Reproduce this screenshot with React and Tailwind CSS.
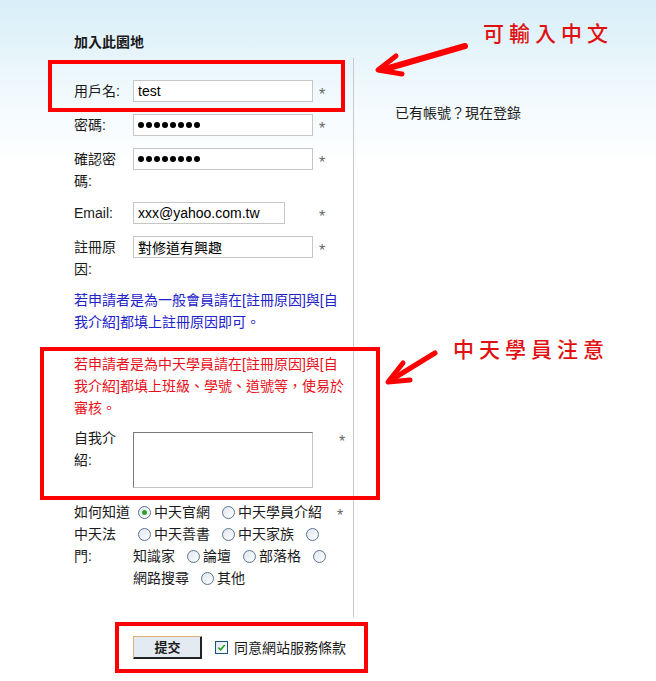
import React from 'react';

const Radio = ({ checked, first }) => (
  <span
    className={`inline-flex items-center justify-center w-[13px] h-[13px] rounded-full border border-[#5b7390] bg-gradient-to-br from-[#dfe6ee] to-white mr-[3px] shrink-0 ${first ? 'ml-[5px]' : 'ml-[12px]'}`}
  >
    {checked && <span className="w-[5px] h-[5px] rounded-full bg-[#2ea12e]" />}
  </span>
);

const Star = () => <span className="h-[22px] text-[16px] leading-[29px] text-[#666]">*</span>;

const Row = ({ label, children, cell = 'w-[186px]', className = '' }) => (
  <div className={`flex items-start ${className}`}>
    <div className="w-[59px] leading-[22px] shrink-0">{label}</div>
    <div className={`${cell} shrink-0`}>{children}</div>
    <Star />
  </div>
);

const inputCls =
  'h-[22px] border border-[#c6c6c6] bg-white px-[4px] text-[14px] text-black outline-none';

const Dots = () => (
  <div className={`${inputCls} w-[180px] flex items-center gap-[2px]`}>
    {Array.from({ length: 8 }).map((_, i) => (
      <span key={i} className="w-[6px] h-[6px] rounded-full bg-black" />
    ))}
  </div>
);

const App = () => {
  return (
    <div className="relative w-[656px] min-h-[681px] bg-linear-to-b from-[#d8eef8] from-0% via-[#eef8fc] via-[12%] to-white to-[24%] text-[14px] text-[#1a1a1a] font-['Liberation_Sans','Noto_Sans_CJK_TC',sans-serif]">
      <div className="pl-[74px] pt-[31px]">
        <h2 className="font-bold leading-[22px]">加入此園地</h2>

        <div className="flex mt-[5px]">
          {/* form column */}
          <div className="w-[280px] border-r border-[#c8c8c8] pt-[22px] pb-[28px]">
            <Row label="用戶名:" className="mb-[12px]">
              <input readOnly value="test" className={`${inputCls} w-[180px]`} />
            </Row>
            <Row label="密碼:" className="mb-[12px]">
              <Dots />
            </Row>
            <Row label="確認密碼:" className="mb-[10px]">
              <Dots />
            </Row>
            <Row label="Email:" className="mb-[12px]">
              <input readOnly value="xxx@yahoo.com.tw" className={`${inputCls} w-[152px]`} />
            </Row>
            <Row label="註冊原因:">
              <input readOnly value="對修道有興趣" className={`${inputCls} w-[180px]`} />
            </Row>

            <p className="mt-[9px] w-[272px] leading-[22px] text-[#1d22c9]">
              若申請者是為一般會員請在[註冊原因]與[自我介紹]都填上註冊原因即可。
            </p>
            <p className="mt-[20px] w-[272px] leading-[22px] text-[#e8101a]">
              若申請者是為中天學員請在[註冊原因]與[自我介紹]都填上班級、學號、道號等，使易於審核。
            </p>

            <Row label="自我介紹:" cell="w-[206px]" className="mt-[8px]">
              <textarea
                readOnly
                className="block mt-[5px] w-[180px] h-[56px] resize-none bg-white border border-[#c4c4c4] border-t-[#7a7a7a] border-l-[#7a7a7a] outline-none"
              />
            </Row>

            <Row label="如何知道中天法門:" cell="w-[204px]" className="mt-[13px]">
              <div className="leading-[22px]">
                <div className="flex items-center h-[22px]">
                  <Radio first checked />
                  <span>中天官網</span>
                  <Radio />
                  <span>中天學員介紹</span>
                </div>
                <div className="flex items-center h-[22px]">
                  <Radio first />
                  <span>中天善書</span>
                  <Radio />
                  <span>中天家族</span>
                  <Radio />
                </div>
                <div className="flex items-center h-[22px]">
                  <span>知識家</span>
                  <Radio />
                  <span>論壇</span>
                  <Radio />
                  <span>部落格</span>
                  <Radio />
                </div>
                <div className="flex items-center h-[22px]">
                  <span>網路搜尋</span>
                  <Radio />
                  <span>其他</span>
                </div>
              </div>
            </Row>
          </div>

          {/* right column */}
          <div className="pl-[41px] pt-[44px] leading-[22px]">已有帳號？現在登錄</div>
        </div>

        {/* submit row */}
        <div className="flex items-center mt-[19px] ml-[59px]">
          <button className="w-[69px] h-[23px] bg-[#e4eaf1] border border-[#222] border-t-[#e6b070] border-l-[#e6b070] shadow-[inset_-1px_-1px_0_#222] text-[13px] font-bold leading-none">
            提交
          </button>
          <span className="ml-[13px] w-[13px] h-[13px] border border-[#1c5180] bg-gradient-to-br from-[#dfe6ee] to-white flex items-center justify-center">
            <svg viewBox="0 0 10 10" className="w-[9px] h-[9px]">
              <path d="M1.5 5.2 L4 7.6 L8.6 2.2" fill="none" stroke="#21a121" strokeWidth="1.8" />
            </svg>
          </span>
          <span className="ml-[6px] leading-[22px]">同意網站服務條款</span>
        </div>
      </div>

      {/* annotations */}
      <div className="absolute left-[48px] top-[60px] w-[297px] h-[52px] border-4 border-[#ff0000]" />
      <div className="absolute left-[40px] top-[347px] w-[340px] h-[153px] border-4 border-[#ff0000]" />
      <div className="absolute left-[115px] top-[622px] w-[253px] h-[51px] border-4 border-[#ff0000]" />

      <div className="absolute left-[483px] top-[20px] text-[21px] font-medium tracking-[5px] leading-[28px] text-[#e01010]">
        可輸入中文
      </div>
      <div className="absolute left-[453px] top-[336px] text-[21px] font-medium tracking-[5px] leading-[28px] text-[#e01010]">
        中天學員注意
      </div>

      <svg className="absolute inset-0 pointer-events-none" width="656" height="681">
        <g fill="none" stroke="#ff0000" strokeLinecap="round" strokeLinejoin="round">
          <line x1="465" y1="46" x2="382" y2="70" strokeWidth="6" />
          <polyline points="396,56 378,70 402,74" strokeWidth="5" />
          <line x1="435" y1="353" x2="391" y2="380" strokeWidth="5" />
          <polyline points="403,363 388,382 410,380" strokeWidth="5" />
        </g>
      </svg>
    </div>
  );
};

export default App;
